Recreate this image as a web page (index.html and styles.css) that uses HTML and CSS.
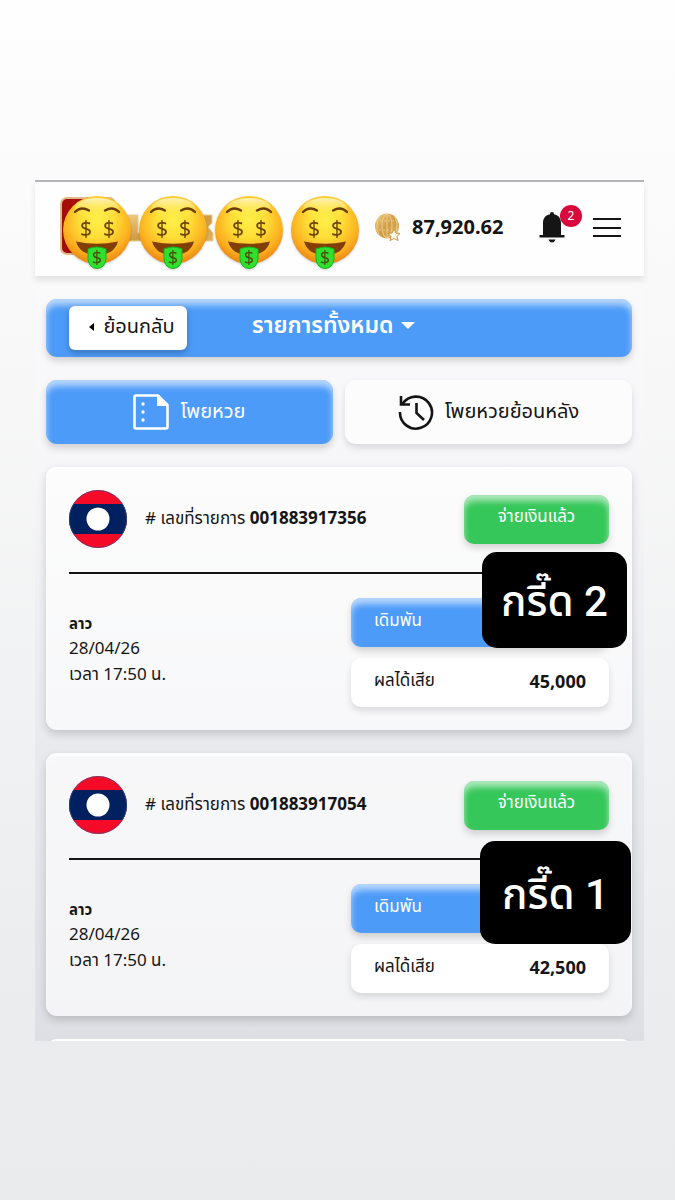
FILE: index.html
```html
<!DOCTYPE html>
<html lang="th">
<head>
    <meta charset="UTF-8">
    <meta name="viewport" content="width=device-width, initial-scale=1.0">
    <title>รายการทั้งหมด</title>
    <link rel="stylesheet" href="styles.css">
</head>
<body>
    <!-- Shared shapes -->
    <svg class="defs" aria-hidden="true">
        <defs>
            <radialGradient id="face" cx="50%" cy="36%" r="66%">
                <stop offset="0" stop-color="#fff04a"/>
                <stop offset="0.4" stop-color="#fedc35"/>
                <stop offset="0.75" stop-color="#fbb020"/>
                <stop offset="1" stop-color="#e87f10"/>
            </radialGradient>
            <linearGradient id="shine" x1="0" y1="0" x2="0" y2="1">
                <stop offset="0" stop-color="#fffbe0" stop-opacity="0.8"/>
                <stop offset="1" stop-color="#fff23c" stop-opacity="0"/>
            </linearGradient>
            <linearGradient id="gold" x1="0" y1="0" x2="1" y2="1">
                <stop offset="0" stop-color="#f0cd83"/>
                <stop offset="0.5" stop-color="#d09c47"/>
                <stop offset="1" stop-color="#dfb25e"/>
            </linearGradient>
            <symbol id="money-face" viewBox="0 0 70 76">
                <circle cx="35" cy="35" r="34" fill="url(#face)"/>
                <ellipse cx="35" cy="13" rx="22" ry="10" fill="url(#shine)"/>
                <path d="M13 17 Q19 11 27 15.500 M43 15.500 Q51 11 57 17" fill="none" stroke="#6b3c06" stroke-width="2.400" stroke-linecap="round"/>
                <g fill="#6b4305" font-family="Noto Sans, sans-serif" text-anchor="middle">
                    <text x="24" y="41" font-size="21">$</text>
                    <text x="47" y="41" font-size="21">$</text>
                </g>
                <path d="M14 46.500 Q35 51 56 46.500 Q52 60 35 60 Q18 60 14 46.500Z" fill="#823e07"/>
                <path d="M26 54 Q35 50 44 54 V64 Q43 73 35 73.500 Q27 73 26 64Z" fill="#2fe02f" stroke="#12b41c" stroke-width="1"/>
                <text x="35" y="69" font-size="18" fill="#4b4d05" font-family="Noto Sans, sans-serif" text-anchor="middle">$</text>
            </symbol>
            <symbol id="flag-laos" viewBox="0 0 58 58">
                <clipPath id="round"><circle cx="29" cy="29" r="29"/></clipPath>
                <g clip-path="url(#round)">
                    <rect width="58" height="58" fill="#f50a28"/>
                    <rect y="14" width="58" height="30" fill="#00205f"/>
                </g>
                <circle cx="29" cy="29" r="11.500" fill="#fff"/>
                <circle cx="29" cy="29" r="28.500" fill="none" stroke="#31518c" stroke-opacity="0.6"/>
            </symbol>
        </defs>
    </svg>

    <div class="app">
        <!-- Top bar -->
        <header class="topbar">
            <div class="logo">
                <svg class="logo-art" viewBox="0 0 160 60" aria-hidden="true">
                    <rect x="1" y="1" width="54" height="56" rx="6" fill="#a50d08" stroke="#e2b98c" stroke-width="2"/>
                    <path d="M66 18 h12 v18 h10 v8 h-22z M142 18 h10 v8 l-4 4 l5 6 v8 h-12z" fill="url(#gold)" stroke="#e4cd91" stroke-width="1"/>
                </svg>
                <svg class="face"><use href="#money-face"/></svg>
                <svg class="face"><use href="#money-face"/></svg>
                <svg class="face"><use href="#money-face"/></svg>
                <svg class="face"><use href="#money-face"/></svg>
            </div>
            <div class="balance">
                <svg class="coin" viewBox="0 0 26 28" aria-hidden="true">
                    <ellipse cx="13" cy="13" rx="12" ry="12.500" fill="url(#gold)"/>
                    <g fill="none" stroke="#f0d59b" stroke-width="0.800">
                        <ellipse cx="13" cy="13" rx="5" ry="12"/>
                        <path d="M13 1 V25 M5 4 Q1 13 5 22 M21 4 Q25 13 21 22"/>
                        <path d="M2 8 H24 M1 17 H25" stroke-dasharray="2 2"/>
                    </g>
                    <path d="M20 16 l2 4 4 .5 -3 3 1 4 -4 -2 -4 2 1 -4 -3 -3 4 -.5z" fill="#fff8e6" stroke="#c99443" stroke-width="1"/>
                </svg>
                <span class="amount">87,920.62</span>
            </div>
            <button class="icon-btn bell-btn" aria-label="แจ้งเตือน">
                <svg viewBox="0 0 26 32" width="26" height="32" aria-hidden="true" fill="#151515">
                    <path d="M13 1 a2 2 0 0 1 2 2.200 C20 4 22 8 22 12 V24 H25.500 V26.500 H.5 V24 H4 V12 C4 8 6 4 11 3.200 A2 2 0 0 1 13 1Z"/>
                    <path d="M9.500 28.500 h7 q-1 3 -3.500 3 t-3.500 -3z"/>
                </svg>
                <span class="badge">2</span>
            </button>
            <button class="icon-btn" aria-label="เมนู">
                <svg viewBox="0 0 28 20" width="28" height="20" aria-hidden="true" stroke="#151515" stroke-width="2">
                    <path d="M0 2 H28 M0 11 H28 M0 19 H28"/>
                </svg>
            </button>
        </header>

        <main class="content">
            <!-- Back / filter -->
            <div class="filter-bar glossy">
                <button class="back-btn">
                    <svg viewBox="0 0 5 8" width="5" height="8" aria-hidden="true"><path d="M5 0 V8 L0 4Z"/></svg>
                    ย้อนกลับ
                </button>
                <button class="filter-btn">
                    รายการทั้งหมด
                    <svg viewBox="0 0 14 7" width="14" height="7" aria-hidden="true"><path d="M0 0 H14 L7 7Z" fill="#fff"/></svg>
                </button>
            </div>

            <!-- Tabs -->
            <nav class="tabs">
                <button class="tab tab-active glossy">
                    <svg viewBox="0 0 36 36" width="36" height="36" aria-hidden="true">
                        <path d="M3 1.500 H25 L34.500 11 V33 q0 1.500 -1.500 1.500 H3 q-1.500 0 -1.500 -1.500 V3 q0 -1.500 1.500 -1.500z" fill="none" stroke="#fff" stroke-width="2.600"/>
                        <path d="M24 1 L35 12 H24Z" fill="#fff"/>
                        <g fill="#fff"><circle cx="10" cy="10" r="1.700"/><circle cx="10" cy="18" r="1.700"/><circle cx="10" cy="26" r="1.700"/></g>
                    </svg>
                    โพยหวย
                </button>
                <button class="tab">
                    <svg viewBox="0 0 36 36" width="36" height="36" aria-hidden="true" fill="none" stroke="#151515" stroke-width="2.600">
                        <path d="M4.500 10 A16 16 0 1 1 2 18"/>
                        <path d="M3 2 V10.500 H12"/>
                        <path d="M18.500 9 V19 L26 26"/>
                    </svg>
                    โพยหวยย้อนหลัง
                </button>
            </nav>

            <!-- Tickets -->
            <article class="card">
                <div class="card-head">
                    <svg class="flag" role="img" aria-label="ลาว"><use href="#flag-laos"/></svg>
                    <p class="ticket-no"># เลขที่รายการ <b>001883917356</b></p>
                    <button class="status glossy">จ่ายเงินแล้ว</button>
                </div>
                <hr>
                <div class="card-body">
                    <div class="draw">
                        <strong>ลาว</strong>
                        <span>28/04/26</span>
                        <span>เวลา 17:50 น.</span>
                    </div>
                    <div class="totals">
                        <div class="total stake glossy">เดิมพัน</div>
                        <div class="total">ผลได้เสีย <b>45,000</b></div>
                    </div>
                </div>
                <div class="sticker">กรี๊ด 2</div>
            </article>

            <article class="card">
                <div class="card-head">
                    <svg class="flag" role="img" aria-label="ลาว"><use href="#flag-laos"/></svg>
                    <p class="ticket-no"># เลขที่รายการ <b>001883917054</b></p>
                    <button class="status glossy">จ่ายเงินแล้ว</button>
                </div>
                <hr>
                <div class="card-body">
                    <div class="draw">
                        <strong>ลาว</strong>
                        <span>28/04/26</span>
                        <span>เวลา 17:50 น.</span>
                    </div>
                    <div class="totals">
                        <div class="total stake glossy">เดิมพัน</div>
                        <div class="total">ผลได้เสีย <b>42,500</b></div>
                    </div>
                </div>
                <div class="sticker sticker-large">กรี๊ด 1</div>
            </article>

            <!-- Top edge of the next ticket -->
            <div class="peek"><div class="card"></div></div>
        </main>
    </div>
</body>
</html>
```
FILE: styles.css
```css
/* Basic Styling */
* { box-sizing: border-box; }
body {
    margin: 0;
    min-height: 100vh;
    padding: 180px 31px 0 35px;
    font-family: "Noto Sans", "Noto Sans Thai", sans-serif;
    font-size: 17px;
    color: #151515;
    background: linear-gradient(#fefefe, #fafafa 20%, #ebecee 85%, #eaebed);
}
button {
    font: inherit;
    color: inherit;
    border: none;
    padding: 0;
    background: none;
    cursor: pointer;
}
.defs { position: absolute; width: 0; height: 0; }
.app { background: linear-gradient(#fcfcfd, #f7f7f9 30%, #e9eaee 65%, #dedfe4); }

/* Top bar */
.topbar {
    display: flex;
    align-items: center;
    height: 96px;
    padding: 0 23px 4px 27px;
    border-top: 2px solid #b5b5b9;
    background: #fefefe;
    box-shadow: 0 5px 6px rgba(0, 0, 0, 0.09);
}
.logo { position: relative; display: flex; gap: 6px; padding-top: 12px; }
.logo-art { position: absolute; left: -2px; top: 14px; width: 160px; height: 60px; }
.face { position: relative; width: 70px; height: 76px; filter: drop-shadow(0 1px 1px rgba(0, 0, 0, 0.2)); }
.balance { display: flex; align-items: center; gap: 12px; margin-left: 14px; }
.coin { width: 26px; height: 28px; }
.amount { font-size: 20px; font-weight: bold; line-height: 28px; }
.icon-btn { position: relative; display: flex; }
.bell-btn { margin: 0 28px 0 auto; }
.badge {
    position: absolute;
    left: 21px;
    top: -6px;
    width: 22px;
    height: 22px;
    border-radius: 50%;
    background: #d9083c;
    color: white;
    font-size: 12px;
    line-height: 21px;
    text-align: center;
}

/* Content */
.content {
    display: flex;
    flex-direction: column;
    gap: 23px;
    padding: 23px 12px 0 11px;
}
.glossy {
    background: #4d9bf8;
    color: white;
    box-shadow: inset 0 6px 6px rgba(255, 255, 255, 0.6), 0 4px 7px rgba(0, 0, 0, 0.16);
}
.filter-bar {
    display: flex;
    align-items: center;
    height: 58px;
    padding: 0 23px;
    border-radius: 11px;
}
.back-btn {
    display: flex;
    align-items: center;
    justify-content: center;
    gap: 9px;
    width: 118px;
    height: 44px;
    padding: 0 0 2px 8px;
    border-radius: 6px;
    background: white;
    color: #151515;
    font-size: 20px;
    box-shadow: 0 3px 6px rgba(0, 0, 0, 0.25);
}
.filter-btn {
    display: flex;
    align-items: center;
    gap: 8px;
    margin-left: 65px;
    padding-bottom: 6px;
    font-size: 23px;
    font-weight: 600;
}

/* Tabs */
.tabs { display: grid; grid-template-columns: 1fr 1fr; gap: 12px; }
.tab {
    display: flex;
    align-items: center;
    justify-content: center;
    gap: 11px;
    height: 64px;
    border-radius: 11px;
    background: #fcfcfd;
    font-size: 20px;
    box-shadow: 0 4px 7px rgba(0, 0, 0, 0.12);
}
.tab-active {
    background: #4d9bf8;
    box-shadow: inset 0 6px 6px rgba(255, 255, 255, 0.6), 0 4px 7px rgba(0, 0, 0, 0.16);
}

/* Ticket cards */
.card {
    position: relative;
    padding: 23px;
    border-radius: 11px;
    background: rgba(255, 255, 255, 0.65);
    box-shadow: inset 0 3px 3px rgba(255, 255, 255, 0.8), 0 4px 8px rgba(0, 0, 0, 0.16);
}
.card-head { display: flex; align-items: center; }
.flag { width: 58px; height: 58px; }
.ticket-no { margin: 0 auto 0 18px; line-height: 26px; padding-bottom: 2px; }
.status {
    width: 145px;
    height: 49px;
    padding-bottom: 4px;
    border-radius: 10px;
    background: #35c759;
}
hr { margin: 24px 0; border: none; border-top: 2px solid #151515; }
.card-body { display: flex; justify-content: space-between; }
.draw { display: flex; flex-direction: column; padding-top: 13px; line-height: 26px; }
.draw strong { font-size: 15px; line-height: 24px; }
.totals { display: flex; flex-direction: column; gap: 11px; width: 258px; }
.total {
    display: flex;
    align-items: center;
    justify-content: space-between;
    height: 49px;
    padding: 0 23px 4px;
    border-radius: 10px;
    background: white;
    box-shadow: 0 4px 7px rgba(0, 0, 0, 0.12);
}
.total b { font-size: 18px; }
.stake {
    background: #4d9bf8;
    box-shadow: inset 0 6px 6px rgba(255, 255, 255, 0.6), 0 4px 7px rgba(0, 0, 0, 0.16);
}
.sticker {
    position: absolute;
    top: 85px;
    right: 5px;
    width: 145px;
    height: 96px;
    border-radius: 15px;
    background: black;
    color: white;
    font-family: "Roboto", "Noto Sans Thai", sans-serif;
    font-size: 42px;
    font-weight: 500;
    line-height: 100px;
    text-align: center;
    white-space: nowrap;
}
.sticker-large { top: 88px; right: 1px; width: 151px; height: 103px; line-height: 108px; }
.peek { height: 2px; overflow: hidden; }
```
